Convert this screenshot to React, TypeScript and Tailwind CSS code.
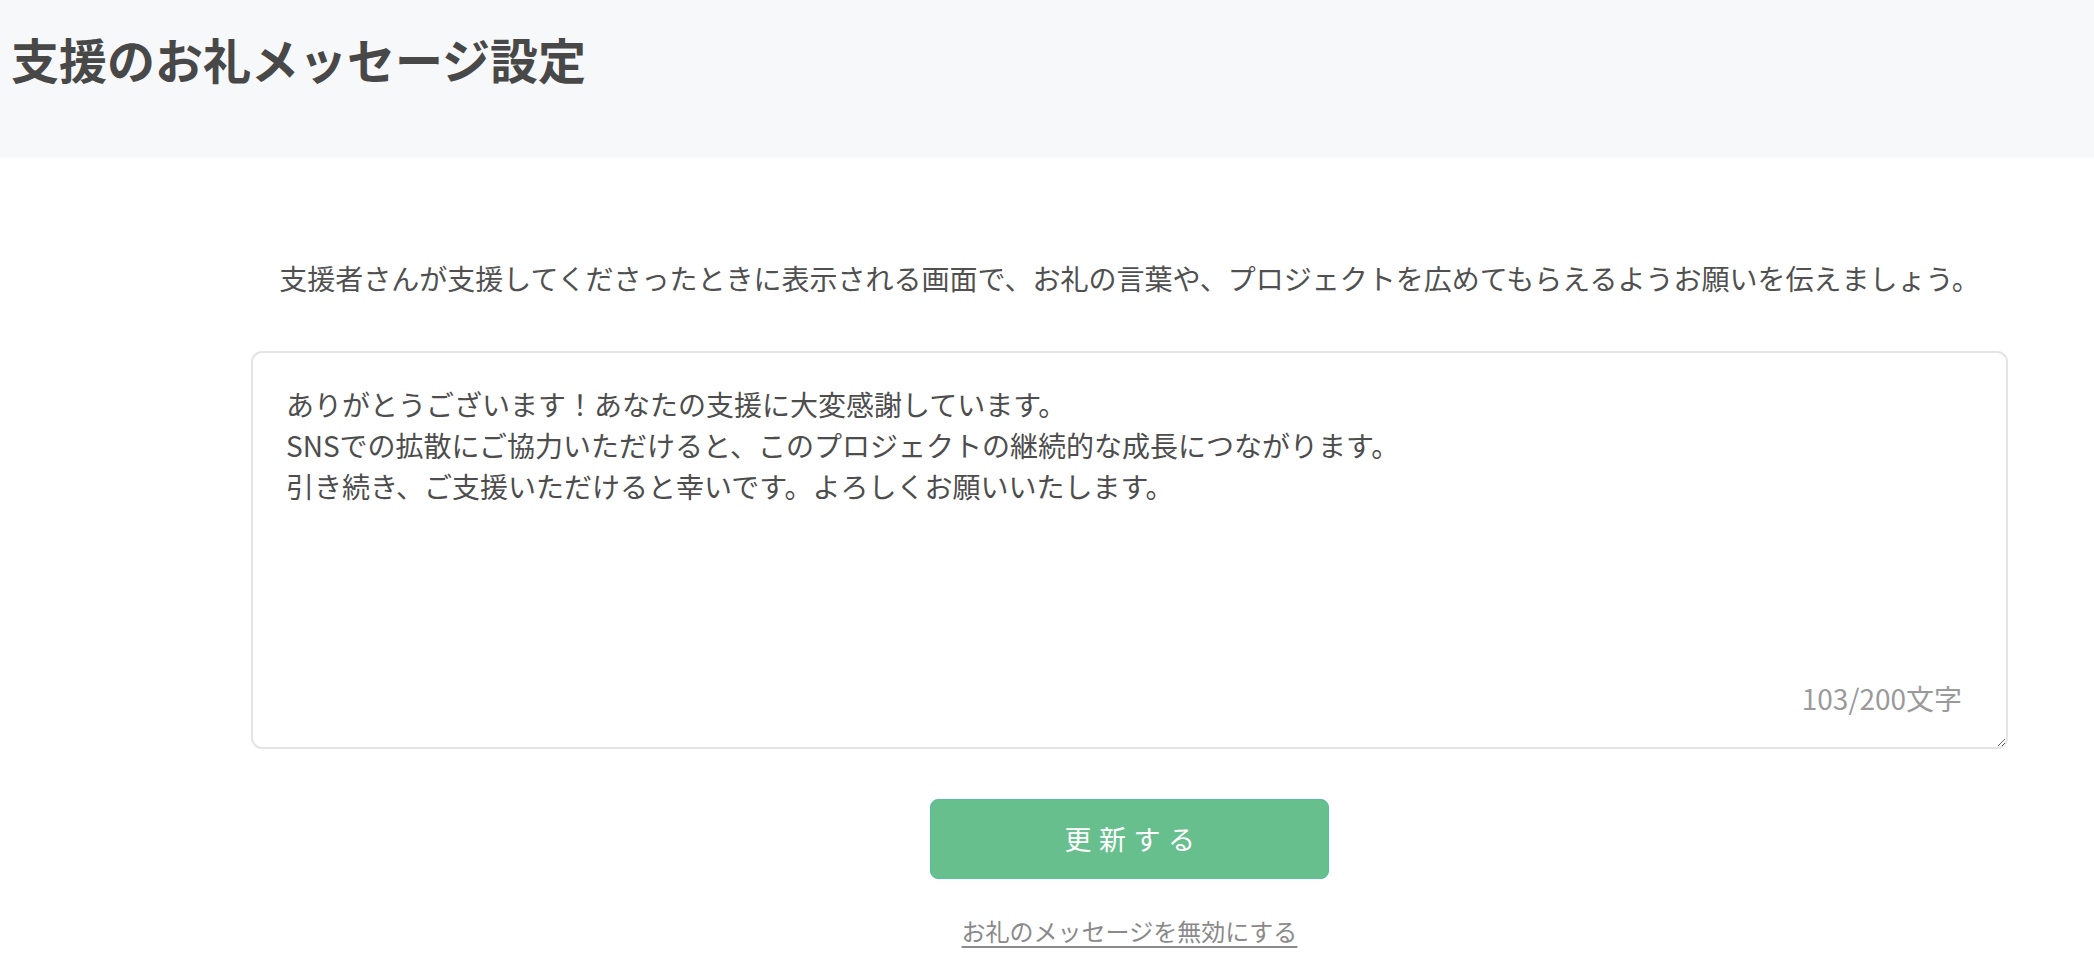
import React from "react";

const message =
  "ありがとうございます！あなたの支援に大変感謝しています。\nSNSでの拡散にご協力いただけると、このプロジェクトの継続的な成長につながります。\n引き続き、ご支援いただけると幸いです。よろしくお願いいたします。";

export default function App() {
  return (
    <div
      className="min-h-screen bg-white text-[#4d4d4d]"
      style={{ fontFamily: '"Noto Sans CJK JP", "Noto Sans", sans-serif' }}
    >
      <header className="h-[158px] bg-[#f7f8fa] pl-[11px] pt-[22px]">
        <h1 className="text-[48px] font-bold leading-[72px] text-[#484848]">
          支援のお礼メッセージ設定
        </h1>
      </header>
      <main className="pl-[251px] pr-[86px] pt-[100px]">
        <p className="text-center text-[28px] leading-[41px] text-[#505050]">
          支援者さんが支援してくださったときに表示される画面で、お礼の言葉や、プロジェクトを広めてもらえるようお願いを伝えましょう。
        </p>
        <div className="relative mt-[52px]">
          <textarea
            defaultValue={message}
            className="block h-[398px] w-full resize-y rounded-[11px] border-2 border-[#e4e4e4] bg-white px-[33px] pt-[31px] text-[28px] leading-[41px] text-[#4d4d4d] outline-none"
          />
          <span className="pointer-events-none absolute bottom-[31px] right-[46px] text-[28px] leading-[40px] text-[#9a9a9a]">
            103/200文字
          </span>
        </div>
        <div className="mt-[50px] flex flex-col items-center">
          <button className="flex h-[80px] w-[399px] items-center justify-center rounded-[8px] border border-[#55bfa3] bg-[#66bf8c] pl-[8px] text-[27px] tracking-[0.28em] text-white">
            更新する
          </button>
          <a
            href="#"
            className="mt-[34px] text-[24px] leading-[36px] text-[#8a8a8a] underline underline-offset-[5px]"
          >
            お礼のメッセージを無効にする
          </a>
        </div>
      </main>
    </div>
  );
}
